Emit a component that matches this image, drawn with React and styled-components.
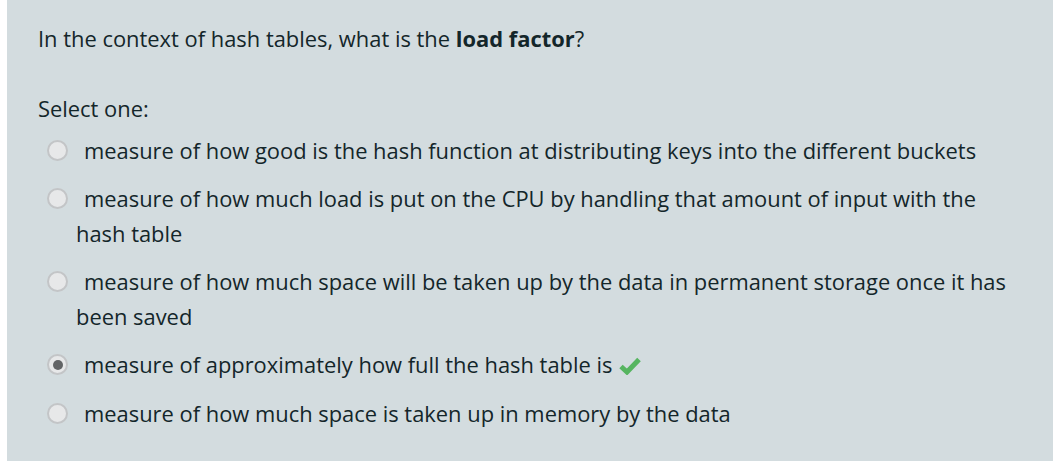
import React from 'react';
import styled, { createGlobalStyle } from 'styled-components';

const GlobalStyle = createGlobalStyle`
  html, body {
    margin: 0;
    padding: 0;
    background: #ffffff;
  }
  body {
    font-family: "Open Sans", "Noto Sans", sans-serif;
    color: #13262a;
  }
`;

const Panel = styled.div`
  margin-left: 7px;
  height: 461px;
  background: #d3dcdf;
  padding: 24px 0 0 31px;
  box-sizing: border-box;
  font-size: 21.9px;
`;

const Question = styled.p`
  margin: 0;
  line-height: 30px;
  b { font-weight: 700; }
`;

const Prompt = styled.div`
  margin-top: 40px;
  line-height: 30px;
`;

const Options = styled.div`
  display: flex;
  flex-direction: column;
  gap: 13.3px;
  margin-top: 8.5px;
  padding-left: 9px;
`;

const Option = styled.div`
  display: flex;
  align-items: flex-start;
`;

const Radio = styled.span`
  flex: none;
  width: 17px;
  height: 17px;
  margin-top: 7px;
  border-radius: 50%;
  border: 2px solid #c3c5c7;
  background: #e7e8e9;
  display: flex;
  align-items: center;
  justify-content: center;
  &::after {
    content: '';
    width: 10px;
    height: 10px;
    border-radius: 50%;
    background: ${p => (p.checked ? '#626466' : 'transparent')};
  }
`;

const Label = styled.div`
  margin-left: 8px;
  width: 940px;
  line-height: 35px;
  text-indent: 8px;
`;

const Check = styled.svg`
  width: 22px;
  height: 18px;
  margin-left: 7px;
  vertical-align: -2px;
`;

const answers = [
  { text: 'measure of how good is the hash function at distributing keys into the different buckets' },
  { text: 'measure of how much load is put on the CPU by handling that amount of input with the hash table' },
  { text: 'measure of how much space will be taken up by the data in permanent storage once it has been saved' },
  { text: 'measure of approximately how full the hash table is', checked: true, correct: true },
  { text: 'measure of how much space is taken up in memory by the data' },
];

export default function App() {
  return (
    <>
      <GlobalStyle />
      <Panel>
        <Question>
          In the context of hash tables, what is the <b>load factor</b>?
        </Question>
        <Prompt>Select one:</Prompt>
        <Options>
          {answers.map((a, i) => (
            <Option key={i}>
              <Radio checked={a.checked} />
              <Label>
                {a.text}
                {a.correct && (
                  <Check viewBox="0 0 22 18">
                    <path d="M2 9.5 L8 15 L20 2.5" fill="none" stroke="#56b560" strokeWidth="5" strokeLinejoin="miter" />
                  </Check>
                )}
              </Label>
            </Option>
          ))}
        </Options>
      </Panel>
    </>
  );
}
